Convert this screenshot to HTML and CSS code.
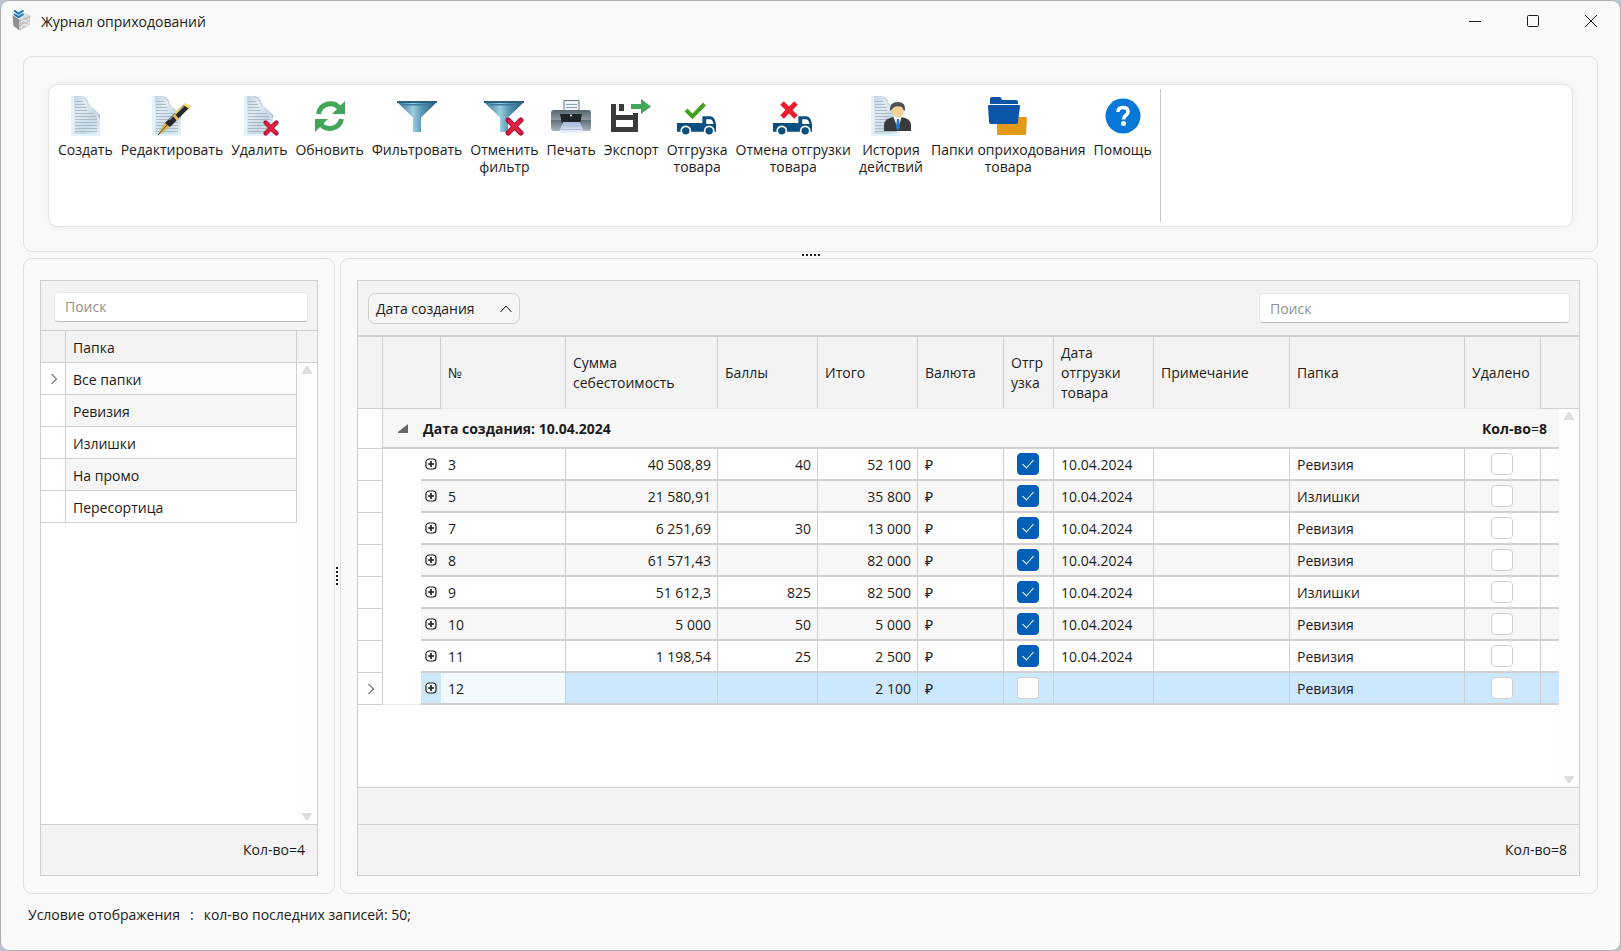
FILE: index.html
```
<!DOCTYPE html>
<html lang="ru">
<head>
    <meta charset="UTF-8">
    <meta name="viewport" content="width=device-width, initial-scale=1.0">
    <title>Журнал оприходований</title>
    <link rel="stylesheet" href="styles.css">
</head>
<body>
    <!-- shared icon parts -->
    <svg class="defs" width="0" height="0" aria-hidden="true">
        <defs>
            <linearGradient id="paper" x1="0" y1="0" x2="1" y2="1">
                <stop offset="0" stop-color="#b9d0dc"/>
                <stop offset="0.35" stop-color="#e3edf3"/>
                <stop offset="0.65" stop-color="#c6d8e2"/>
                <stop offset="1" stop-color="#e9f5fb"/>
            </linearGradient>
            <linearGradient id="fold" x1="0" y1="0" x2="1" y2="1">
                <stop offset="0" stop-color="#7fa0b3"/>
                <stop offset="0.5" stop-color="#dbe8ef"/>
                <stop offset="1" stop-color="#86a5b8"/>
            </linearGradient>
            <linearGradient id="steel" x1="0" y1="0" x2="1" y2="0">
                <stop offset="0" stop-color="#2d6a8c"/>
                <stop offset="0.4" stop-color="#9ccfe2"/>
                <stop offset="0.6" stop-color="#5f9cb9"/>
                <stop offset="1" stop-color="#1d5474"/>
            </linearGradient>
            <linearGradient id="printer" x1="0" y1="0" x2="0" y2="1">
                <stop offset="0" stop-color="#56646d"/>
                <stop offset="0.45" stop-color="#8b9aa3"/>
                <stop offset="0.5" stop-color="#5f6f79"/>
                <stop offset="1" stop-color="#a9b6be"/>
            </linearGradient>
            <linearGradient id="sheet" x1="0" y1="0" x2="0" y2="1">
                <stop offset="0" stop-color="#9fb6dd"/>
                <stop offset="1" stop-color="#f2f6fc"/>
            </linearGradient>
            <symbol id="doc" viewBox="0 0 30 40">
                <path d="M0 0H10C15 1 17 5 18 8L29 20V40H0Z" fill="url(#paper)"/>
                <path d="M0 0H3V40H0ZM0 38H29V40H0Z" fill="#e0f3fc"/>
                <path d="M9 0C15 1 17 6 17 13C22 13 27 16 29 22V19L18 8C17 4 14 0 9 0Z" fill="url(#fold)"/>
                <path d="M4 5.500H12M4 8.500H14M4 11.500H15M4 14.500H16M4 17.500H23M4 20.500H25M4 23.500H26M4 26.500H26M4 29.500H26M4 32.500H26M4 35.500H26" stroke="#a9b9c5" stroke-width="1" fill="none"/>
            </symbol>
            <symbol id="cross" viewBox="0 0 18 18">
                <path d="M3 3L15 15M15 3L3 15" stroke="#b8103c" stroke-width="5" stroke-linecap="round"/>
                <path d="M4 4L14 14M14 4L4 14" stroke="#dc2440" stroke-width="3" stroke-linecap="round"/>
            </symbol>
            <symbol id="funnel" viewBox="0 0 40 32">
                <path d="M0 1H40L24 16.500V31H16V16.500Z" fill="url(#steel)"/>
                <path d="M0 0H40V2H0Z" fill="#2b6080"/>
                <path d="M5 3H35L33 4.500H7Z" fill="#3f7999"/>
            </symbol>
            <symbol id="truck" viewBox="0 0 41 20">
                <path d="M0 8H26V1H34Q37 1 38.500 4L40 9V17H0Z" fill="#0b4f80"/>
                <path d="M30 4H34Q35.500 4 36.500 6L37.500 9H30Z" fill="#fff"/>
                <circle cx="9" cy="16" r="5.500" fill="#fff"/>
                <circle cx="33" cy="16" r="5.500" fill="#fff"/>
                <circle cx="9" cy="16" r="3.800" fill="#0b4f80"/>
                <circle cx="33" cy="16" r="3.800" fill="#0b4f80"/>
            </symbol>
            <symbol id="expand" viewBox="0 0 12 12">
                <rect x="1" y="1" width="10" height="10" rx="3" fill="#fff" stroke="#1b1b1b" stroke-width="1.200"/>
                <path d="M3 6H9M6 3V9" stroke="#1b1b1b" stroke-width="1.600"/>
            </symbol>
        </defs>
    </svg>

    <div class="window">
        <header class="titlebar">
            <svg class="app-icon" viewBox="0 0 20 22" aria-hidden="true">
                <path d="M0.500 5L7.500 9.500V20.500L1.500 16Z" fill="#8f8f8f"/>
                <path d="M7.500 9.500L18.500 5L17.500 15L7.500 20.500Z" fill="#c2c2c2"/>
                <path d="M0.500 5L9 2L18.500 5L7.500 9.500Z" fill="#dedede"/>
                <path d="M9 13Q11 9 13 11T17 8M9 18Q11 13 13 15T17 12" stroke="#efefef" stroke-width="1.200" fill="none"/>
                <path d="M2 0.500L6.500 3.500L11.500 0.500M2 4L6.500 7L11.500 4" stroke="#1a78ba" stroke-width="2" fill="none"/>
            </svg>
            <h1>Журнал оприходований</h1>
            <div class="window-buttons">
                <button aria-label="Свернуть"><svg viewBox="0 0 12 12"><path d="M0 6.500H12"/></svg></button>
                <button aria-label="Развернуть"><svg viewBox="0 0 12 12"><rect x="0.500" y="0.500" width="11" height="11" rx="1"/></svg></button>
                <button aria-label="Закрыть"><svg viewBox="0 0 12 12"><path d="M0 0L12 12M12 0L0 12"/></svg></button>
            </div>
        </header>

        <section class="panel toolbar-panel">
            <div class="toolbar">
                <div class="tools">
                    <button class="tool"><svg viewBox="0 0 40 40"><use href="#doc" x="6" width="30" height="40"/></svg>Создать</button>
                    <button class="tool">
                        <svg viewBox="0 0 40 40">
                            <use href="#doc" width="30" height="40"/>
                            <path d="M6 39L13 26L18 31Z" fill="#d9b44e"/>
                            <path d="M6 39L15 29" stroke="#5b4516"/>
                            <path d="M13 27L31 9L37 12L18 31Z" fill="#26262a"/>
                            <path d="M17 24L32 10" stroke="#8a8a90" stroke-width="1.500"/>
                            <path d="M21 20L25 25L27 23L23 18Z" fill="#e2c25c"/>
                            <path d="M22 17L33 7L39 10L37 13L32 9L24 18Z" fill="#efd56d"/>
                        </svg>Редактировать
                    </button>
                    <button class="tool"><svg viewBox="0 0 40 40"><use href="#doc" x="5" width="30" height="40"/><use href="#cross" x="24" y="24" width="16" height="16"/></svg>Удалить</button>
                    <button class="tool">
                        <svg viewBox="0 0 40 40">
                            <path d="M8.500 18A12 12 0 0 1 29.500 12" stroke="#43a559" stroke-width="5" fill="none"/>
                            <path d="M35 5V18H22Z" fill="#43a559"/>
                            <path d="M31.500 23A12 12 0 0 1 10.500 28" stroke="#43a559" stroke-width="5" fill="none"/>
                            <path d="M5 36V23H18Z" fill="#43a559"/>
                        </svg>Обновить
                    </button>
                    <button class="tool"><svg viewBox="0 0 40 40"><use href="#funnel" y="5" width="40" height="32"/></svg>Фильтровать</button>
                    <button class="tool"><svg viewBox="0 0 40 40"><use href="#funnel" y="5" width="40" height="32"/><use href="#cross" x="21" y="21" width="19" height="19"/></svg>Отменить<br>фильтр</button>
                    <button class="tool">
                        <svg viewBox="0 0 40 40">
                            <path d="M13 4.500H28V17H13Z" fill="#eef3f9" stroke="#66747e"/>
                            <path d="M15 8.500H26M15 11.500H26" stroke="#8ba0c0"/>
                            <rect y="14" width="40" height="21" rx="3" fill="url(#printer)"/>
                            <path d="M9 18H31L29 28H11Z" fill="#1f2226"/>
                            <path d="M12 26H29L33 37H8Z" fill="url(#sheet)"/>
                            <path d="M11 30H30M10 33.500H31" stroke="#a9bbd8"/>
                            <circle cx="20" cy="19.500" r="1" fill="#fff"/>
                        </svg>Печать
                    </button>
                    <button class="tool">
                        <svg viewBox="0 0 40 40">
                            <path d="M0 8H5V19H22V17H27V36H0ZM5 24V31H22V24Z" fill="#3a3a3a" fill-rule="evenodd"/>
                            <rect x="8" y="8" width="5" height="7" fill="#3a3a3a"/>
                            <path d="M20 8H30V3L40 10.500L30 18V13H20Z" fill="#43a559"/>
                        </svg>Экспорт
                    </button>
                    <button class="tool">
                        <svg viewBox="0 0 40 40">
                            <use href="#truck" y="19" width="40" height="20"/>
                            <path d="M9 14L15.500 20.500L27.500 8" stroke="#41a11f" stroke-width="4" fill="none"/>
                        </svg>Отгрузка<br>товара
                    </button>
                    <button class="tool">
                        <svg viewBox="0 0 40 40">
                            <use href="#truck" y="19" width="40" height="20"/>
                            <path d="M9 7L23 21M23 7L9 21" stroke="#ed1b2b" stroke-width="5"/>
                        </svg>Отмена отгрузки<br>товара
                    </button>
                    <button class="tool">
                        <svg viewBox="0 0 40 40">
                            <use href="#doc" width="30" height="40"/>
                            <path d="M13 35V29Q13 24 19 22L26 20L34 22Q40 24 40 29V35Z" fill="#3a3a3d"/>
                            <path d="M22 20H31L27 33Z" fill="#f4f4f4"/>
                            <path d="M26 23H28L29 32L27 34L25 32Z" fill="#1f78c8"/>
                            <ellipse cx="27" cy="14.500" rx="6" ry="7" fill="#f7cf97"/>
                            <path d="M19 15Q18 6 27 6Q35 6 34 15Q32 14 31 11Q25 9 22 12Q21 14 19 15Z" fill="#4c5154"/>
                        </svg>История<br>действий
                    </button>
                    <button class="tool">
                        <svg viewBox="0 0 40 40">
                            <path d="M9 21H39L38 38Q38 39 37 39H10Q9 39 9 38Z" fill="#e39a19"/>
                            <path d="M2 3Q2 1 4 1H12Q13 1 14 4H28Q30 4 30 6V10H2Z" fill="#0b55a9"/>
                            <path d="M1 8.500H31" stroke="#fff"/>
                            <path d="M0 10Q0 9 1 9H31Q32 9 32 10L30 26Q30 28 28 28H3Q1 28 1 26Z" fill="#0b55a9"/>
                        </svg>Папки оприходования<br>товара
                    </button>
                    <button class="tool">
                        <svg viewBox="0 0 40 40">
                            <circle cx="20" cy="20" r="17.500" fill="#0778d8"/>
                            <path d="M15 16Q15 11.500 20 11.500Q25 11.500 25 15.500Q25 18 22.500 19.500Q20.500 21 20.500 23.500" stroke="#fff" stroke-width="3.500" fill="none"/>
                            <circle cx="20.500" cy="27.500" r="2.500" fill="#fff"/>
                        </svg>Помощь
                    </button>
                </div>
            </div>
        </section>

        <div class="splitter splitter-h"><i></i><i></i><i></i><i></i><i></i></div>

        <main class="workspace">
            <section class="panel folders">
                <div class="grid">
                    <div class="grid-top folders-top">
                        <input class="search" type="search" placeholder="Поиск" aria-label="Поиск папки">
                    </div>
                    <div class="grid-body">
                        <table class="folder-table">
                            <thead>
                                <tr><th class="mark"></th><th>Папка</th></tr>
                            </thead>
                            <tbody>
                                <tr class="hover"><td class="mark"><svg class="arrow" viewBox="0 0 6 10"><path d="M0.500 0L5.500 5L0.500 10"/></svg></td><td>Все папки</td></tr>
                                <tr><td class="mark"></td><td>Ревизия</td></tr>
                                <tr><td class="mark"></td><td>Излишки</td></tr>
                                <tr><td class="mark"></td><td>На промо</td></tr>
                                <tr><td class="mark"></td><td>Пересортица</td></tr>
                            </tbody>
                        </table>
                        <div class="scroll">
                            <div class="scroll-cap"></div>
                            <svg viewBox="0 0 10 8"><path d="M4 0H6L10 7V8H0V7Z"/></svg>
                            <svg class="down" viewBox="0 0 10 8"><path d="M0 0H10V1L6 7H4L0 1Z"/></svg>
                        </div>
                    </div>
                    <div class="grid-footer">Кол-во=4</div>
                </div>
            </section>

            <div class="splitter splitter-v"><i></i><i></i><i></i><i></i><i></i></div>

            <section class="panel journal">
                <div class="grid">
                    <div class="grid-top journal-top">
                        <button class="group-chip">Дата создания <svg viewBox="0 0 12 8"><path d="M0.500 7L6 1L11.500 7"/></svg></button>
                        <input class="search" type="search" placeholder="Поиск" aria-label="Поиск в журнале">
                    </div>
                    <div class="grid-body">
                        <table class="journal-table">
                            <colgroup>
                                <col class="c-mark"><col class="c-indent"><col class="c-expand"><col class="c-num"><col class="c-cost">
                                <col class="c-points"><col class="c-total"><col class="c-currency"><col class="c-shipped"><col class="c-date">
                                <col class="c-note"><col class="c-folder"><col class="c-deleted"><col>
                            </colgroup>
                            <thead>
                                <tr>
                                    <th class="dark"></th>
                                    <th class="dark" colspan="2"></th>
                                    <th>№</th>
                                    <th>Сумма себестоимость</th>
                                    <th>Баллы</th>
                                    <th>Итого</th>
                                    <th>Валюта</th>
                                    <th class="break">Отгрузка</th>
                                    <th>Дата отгрузки товара</th>
                                    <th>Примечание</th>
                                    <th>Папка</th>
                                    <th>Удалено</th>
                                    <th class="dark last"></th>
                                </tr>
                            </thead>
                            <tbody>
                                <tr class="group">
                                    <td class="mark"></td>
                                    <td class="toggle"><svg viewBox="0 0 10 9"><path d="M10 0V9H0V8Z"/></svg></td>
                                    <td colspan="10">Дата создания: 10.04.2024</td>
                                    <td colspan="2" class="group-count">Кол-во<span>=</span>8</td>
                                </tr>
                                <tr>
                                    <td class="mark"></td><td class="indent"></td><td class="expand"><svg><use href="#expand"/></svg></td>
                                    <td>3</td><td class="r">40 508,89</td><td class="r">40</td><td class="r">52 100</td><td>₽</td>
                                    <td class="c"><input type="checkbox" aria-label="Отгрузка 3" checked></td><td>10.04.2024</td><td></td><td>Ревизия</td>
                                    <td class="c"><input type="checkbox" aria-label="Удалено 3"></td><td class="last"></td>
                                </tr>
                                <tr>
                                    <td class="mark"></td><td class="indent"></td><td class="expand"><svg><use href="#expand"/></svg></td>
                                    <td>5</td><td class="r">21 580,91</td><td></td><td class="r">35 800</td><td>₽</td>
                                    <td class="c"><input type="checkbox" aria-label="Отгрузка 5" checked></td><td>10.04.2024</td><td></td><td>Излишки</td>
                                    <td class="c"><input type="checkbox" aria-label="Удалено 5"></td><td class="last"></td>
                                </tr>
                                <tr>
                                    <td class="mark"></td><td class="indent"></td><td class="expand"><svg><use href="#expand"/></svg></td>
                                    <td>7</td><td class="r">6 251,69</td><td class="r">30</td><td class="r">13 000</td><td>₽</td>
                                    <td class="c"><input type="checkbox" aria-label="Отгрузка 7" checked></td><td>10.04.2024</td><td></td><td>Ревизия</td>
                                    <td class="c"><input type="checkbox" aria-label="Удалено 7"></td><td class="last"></td>
                                </tr>
                                <tr>
                                    <td class="mark"></td><td class="indent"></td><td class="expand"><svg><use href="#expand"/></svg></td>
                                    <td>8</td><td class="r">61 571,43</td><td></td><td class="r">82 000</td><td>₽</td>
                                    <td class="c"><input type="checkbox" aria-label="Отгрузка 8" checked></td><td>10.04.2024</td><td></td><td>Ревизия</td>
                                    <td class="c"><input type="checkbox" aria-label="Удалено 8"></td><td class="last"></td>
                                </tr>
                                <tr>
                                    <td class="mark"></td><td class="indent"></td><td class="expand"><svg><use href="#expand"/></svg></td>
                                    <td>9</td><td class="r">51 612,3</td><td class="r">825</td><td class="r">82 500</td><td>₽</td>
                                    <td class="c"><input type="checkbox" aria-label="Отгрузка 9" checked></td><td>10.04.2024</td><td></td><td>Излишки</td>
                                    <td class="c"><input type="checkbox" aria-label="Удалено 9"></td><td class="last"></td>
                                </tr>
                                <tr>
                                    <td class="mark"></td><td class="indent"></td><td class="expand"><svg><use href="#expand"/></svg></td>
                                    <td>10</td><td class="r">5 000</td><td class="r">50</td><td class="r">5 000</td><td>₽</td>
                                    <td class="c"><input type="checkbox" aria-label="Отгрузка 10" checked></td><td>10.04.2024</td><td></td><td>Ревизия</td>
                                    <td class="c"><input type="checkbox" aria-label="Удалено 10"></td><td class="last"></td>
                                </tr>
                                <tr>
                                    <td class="mark"></td><td class="indent"></td><td class="expand"><svg><use href="#expand"/></svg></td>
                                    <td>11</td><td class="r">1 198,54</td><td class="r">25</td><td class="r">2 500</td><td>₽</td>
                                    <td class="c"><input type="checkbox" aria-label="Отгрузка 11" checked></td><td>10.04.2024</td><td></td><td>Ревизия</td>
                                    <td class="c"><input type="checkbox" aria-label="Удалено 11"></td><td class="last"></td>
                                </tr>
                                <tr class="selected">
                                    <td class="mark"><svg class="arrow" viewBox="0 0 6 10"><path d="M0.500 0L5.500 5L0.500 10"/></svg></td><td class="indent"></td><td class="expand"><svg><use href="#expand"/></svg></td>
                                    <td class="focused">12</td><td></td><td></td><td class="r">2 100</td><td>₽</td>
                                    <td class="c"><input type="checkbox" aria-label="Отгрузка 12"></td><td></td><td></td><td>Ревизия</td>
                                    <td class="c"><input type="checkbox" aria-label="Удалено 12"></td><td class="last"></td>
                                </tr>
                            </tbody>
                        </table>
                        <div class="scroll">
                            <div class="scroll-cap"></div>
                            <svg viewBox="0 0 10 8"><path d="M4 0H6L10 7V8H0V7Z"/></svg>
                            <svg class="down" viewBox="0 0 10 8"><path d="M0 0H10V1L6 7H4L0 1Z"/></svg>
                        </div>
                    </div>
                    <div class="grid-strip"></div>
                    <div class="grid-footer">Кол-во=8</div>
                </div>
            </section>
        </main>

        <footer class="statusbar"><span>Условие отображения</span><span>:</span><span>кол-во последних записей: 50;</span></footer>
    </div>
</body>
</html>
```
FILE: styles.css
```
* {
    box-sizing: border-box;
}

html {
    background: #bcc4d4;
}

body {
    margin: 0;
    font-family: "Open Sans", "Noto Sans", sans-serif;
    font-size: 14px;
    line-height: 20px;
    color: #1b1b1b;
}

button,
input {
    font: inherit;
    color: inherit;
}

svg {
    display: block;
}

.defs {
    position: absolute;
}

.window {
    display: flex;
    flex-direction: column;
    min-height: 100vh;
    padding: 0 22px;
    background: #f9f9f9;
    border: 1px solid #b0b0b0;
    border-radius: 9px;
}

/* title bar */
.titlebar {
    display: flex;
    align-items: center;
    height: 40px;
    margin: 0 -22px 15px;
    padding-left: 11px;
}

.app-icon {
    width: 20px;
    height: 22px;
    margin-right: 9px;
}

h1 {
    margin: 0;
    padding-top: 2px;
    font-size: 14px;
    font-weight: 400;
}

.window-buttons {
    display: flex;
    margin-left: auto;
}

.window-buttons button {
    display: flex;
    justify-content: center;
    align-items: center;
    width: 58px;
    height: 40px;
    padding: 0;
    background: none;
    border: none;
}

.window-buttons svg {
    width: 12px;
    height: 12px;
    overflow: visible;
    fill: none;
    stroke: #1b1b1b;
}

.panel {
    border: 1px solid #e1e1e1;
    border-radius: 9px;
}

/* toolbar */
.toolbar-panel {
    padding: 27px 24px 24px;
}

.toolbar {
    display: flex;
    height: 143px;
    padding: 4px 0 4px 5px;
    background: #fff;
    border: 1px solid #e4e4e4;
    border-radius: 10px;
    box-shadow: 0 0 8px rgba(0, 0, 0, 0.06);
}

.tools {
    display: flex;
    align-items: flex-start;
    padding-right: 4px;
    border-right: 1px solid #c8c8c8;
}

.tool {
    padding: 7px 4px 0;
    background: none;
    border: none;
    line-height: 17px;
    white-space: nowrap;
    text-align: center;
}

.tool svg {
    width: 40px;
    height: 40px;
    margin: 0 auto 5px;
}

/* splitters */
.splitter {
    display: flex;
    align-items: center;
    justify-content: center;
    gap: 2px;
}

.splitter i {
    width: 2px;
    height: 2px;
    background: #1b1b1b;
}

.splitter-h {
    align-items: flex-start;
    height: 6px;
    padding-top: 2px;
}

.splitter-v {
    flex-direction: column;
    align-items: flex-start;
    width: 5px;
    padding-left: 1px;
}

.workspace {
    display: flex;
    flex: 1;
}

.workspace .panel {
    display: flex;
    padding: 21px 17px 17px 16px;
}

.workspace .folders {
    width: 312px;
    padding-right: 16px;
}

.journal {
    flex: 1;
}

/* grids */
.grid {
    display: flex;
    flex: 1;
    flex-direction: column;
    border: 1px solid #cfcfcf;
    background: #fff;
}

.grid-top {
    display: flex;
    align-items: center;
    background: #f3f3f3;
    border-bottom: 1px solid #cfcfcf;
}

.folders-top {
    height: 50px;
    padding: 2px 9px 0 13px;
}

.journal-top {
    justify-content: space-between;
    height: 56px;
    padding: 0 9px 0 10px;
    border-bottom-width: 2px;
}

.search {
    width: 100%;
    height: 30px;
    padding: 0 10px;
    background: #fff;
    border: 1px solid #e8e8e8;
    border-bottom-color: #bdbdbd;
    border-radius: 4px;
    outline: none;
}

.search::placeholder {
    color: #919191;
}

.journal-top .search {
    width: 311px;
}

.group-chip {
    display: flex;
    justify-content: space-between;
    align-items: center;
    width: 152px;
    height: 31px;
    padding: 1px 7px 0;
    background: #f5f5f5;
    border: 1px solid #cfcfcf;
    border-radius: 7px;
}

.group-chip svg {
    width: 12px;
    height: 8px;
}

.group-chip path,
.arrow path {
    fill: none;
    stroke: #1b1b1b;
}

.grid-body {
    display: flex;
    flex: 1;
    align-items: flex-start;
}

table {
    flex: 1;
    border-spacing: 0;
    table-layout: fixed;
}

th,
td {
    padding: 0 7px;
    border-right: 1px solid #cfcfcf;
    border-bottom: 1px solid #cfcfcf;
    text-align: left;
    font-weight: 400;
}

th {
    background: #f3f3f3;
}

.folder-table th,
.folder-table td {
    height: 32px;
    padding: 2px 7px 0;
}

.folder-table tr:nth-child(even) td {
    background: #f6f6f6;
}

.folder-table tr.hover td {
    background: #fbfbfb;
}

.folder-table th.mark {
    width: 25px;
}

.folder-table td.mark,
.folder-table tr:nth-child(even) td.mark,
.folder-table tr.hover td.mark {
    padding: 0 0 0 1px;
    background: #fff;
}

.arrow {
    width: 6px;
    height: 10px;
    margin: 0 auto;
    overflow: visible;
}

.scroll {
    display: flex;
    flex-direction: column;
    align-items: center;
    align-self: stretch;
    width: 20px;
    padding-bottom: 3px;
    background: #fdfdfd;
}

.scroll-cap {
    align-self: stretch;
    height: 32px;
    margin-bottom: 3px;
    background: #f3f3f3;
    border-bottom: 1px solid #cfcfcf;
}

.journal .scroll-cap {
    height: 72px;
}

.scroll svg {
    width: 10px;
    height: 8px;
    fill: #dedede;
}

.scroll .down {
    margin-top: auto;
}

.c-mark { width: 25px; }
.c-indent { width: 38px; }
.c-expand { width: 20px; }
.c-num { width: 125px; }
.c-cost { width: 152px; }
.c-points { width: 100px; }
.c-total { width: 100px; }
.c-currency { width: 86px; }
.c-shipped { width: 50px; }
.c-date { width: 100px; }
.c-note { width: 136px; }
.c-folder { width: 175px; }
.c-deleted { width: 76px; }

.journal-table th {
    height: 72px;
    border-bottom-color: #e8e8e8;
}

.journal-table th.dark {
    border-bottom-color: #cfcfcf;
}

.journal-table .last {
    border-right: none;
}

.journal-table .break {
    padding-right: 4px;
    word-break: break-all;
}

.journal-table td {
    height: 32px;
    padding-top: 2px;
    border-bottom-width: 2px;
}

.journal-table tr:nth-child(odd) td {
    background: #f7f7f7;
}

.journal-table tr td.mark {
    padding: 0 0 0 1px;
    background: #fff;
    border-bottom-width: 1px;
}

.journal-table tr td.indent {
    background: #fff;
    border: none;
}

.journal-table .group td {
    height: 40px;
    padding: 2px 2px 0;
    background: #f3f3f3;
    border-right: none;
    font-weight: 700;
}

.journal-table .group td.mark {
    background: #fff;
    border-right: 1px solid #cfcfcf;
}

.journal-table .group td.toggle {
    padding: 0 0 0 2px;
}

.toggle svg {
    width: 10px;
    height: 9px;
    margin: 0 auto;
    fill: #666;
}

.journal-table .group .group-count {
    padding-right: 12px;
    text-align: right;
}

.group-count span {
    font-weight: 400;
}

.journal-table td.expand {
    padding: 0 4px;
    border-right: none;
}

.expand svg {
    width: 12px;
    height: 12px;
}

.journal-table td.r {
    padding-right: 6px;
    text-align: right;
}

.journal-table td.c {
    padding: 0 2px 0 0;
}

.journal-table tr.selected td {
    background: #cce8ff;
}

.journal-table tr.selected td.focused {
    background: #f2f9ff;
}

.journal-table tr.selected td.mark,
.journal-table tr.selected td.indent {
    background: #fff;
}

.journal-table tr.selected td.indent {
    border-bottom: 1px solid #ebebeb;
}

input[type="checkbox"] {
    appearance: none;
    display: flex;
    justify-content: center;
    width: 22px;
    height: 22px;
    margin: 0 auto;
    background: #fff;
    border: 1px solid #cfcfcf;
    border-radius: 4px;
}

input[type="checkbox"]:checked {
    background: #005fb8;
    border-color: #005fb8;
}

input[type="checkbox"]:checked::before {
    content: "";
    width: 5px;
    height: 10px;
    margin-top: 3px;
    border: solid #fff;
    border-width: 0 1px 1px 0;
    transform: rotate(42deg);
}

.grid-strip {
    height: 37px;
    background: #f3f3f3;
    border-top: 1px solid #cfcfcf;
}

.grid-footer {
    height: 51px;
    padding: 15px 12px 0 0;
    background: #f3f3f3;
    border-top: 1px solid #cfcfcf;
    text-align: right;
}

.statusbar {
    display: flex;
    gap: 10px;
    height: 56px;
    padding: 11px 5px 0;
}
```
